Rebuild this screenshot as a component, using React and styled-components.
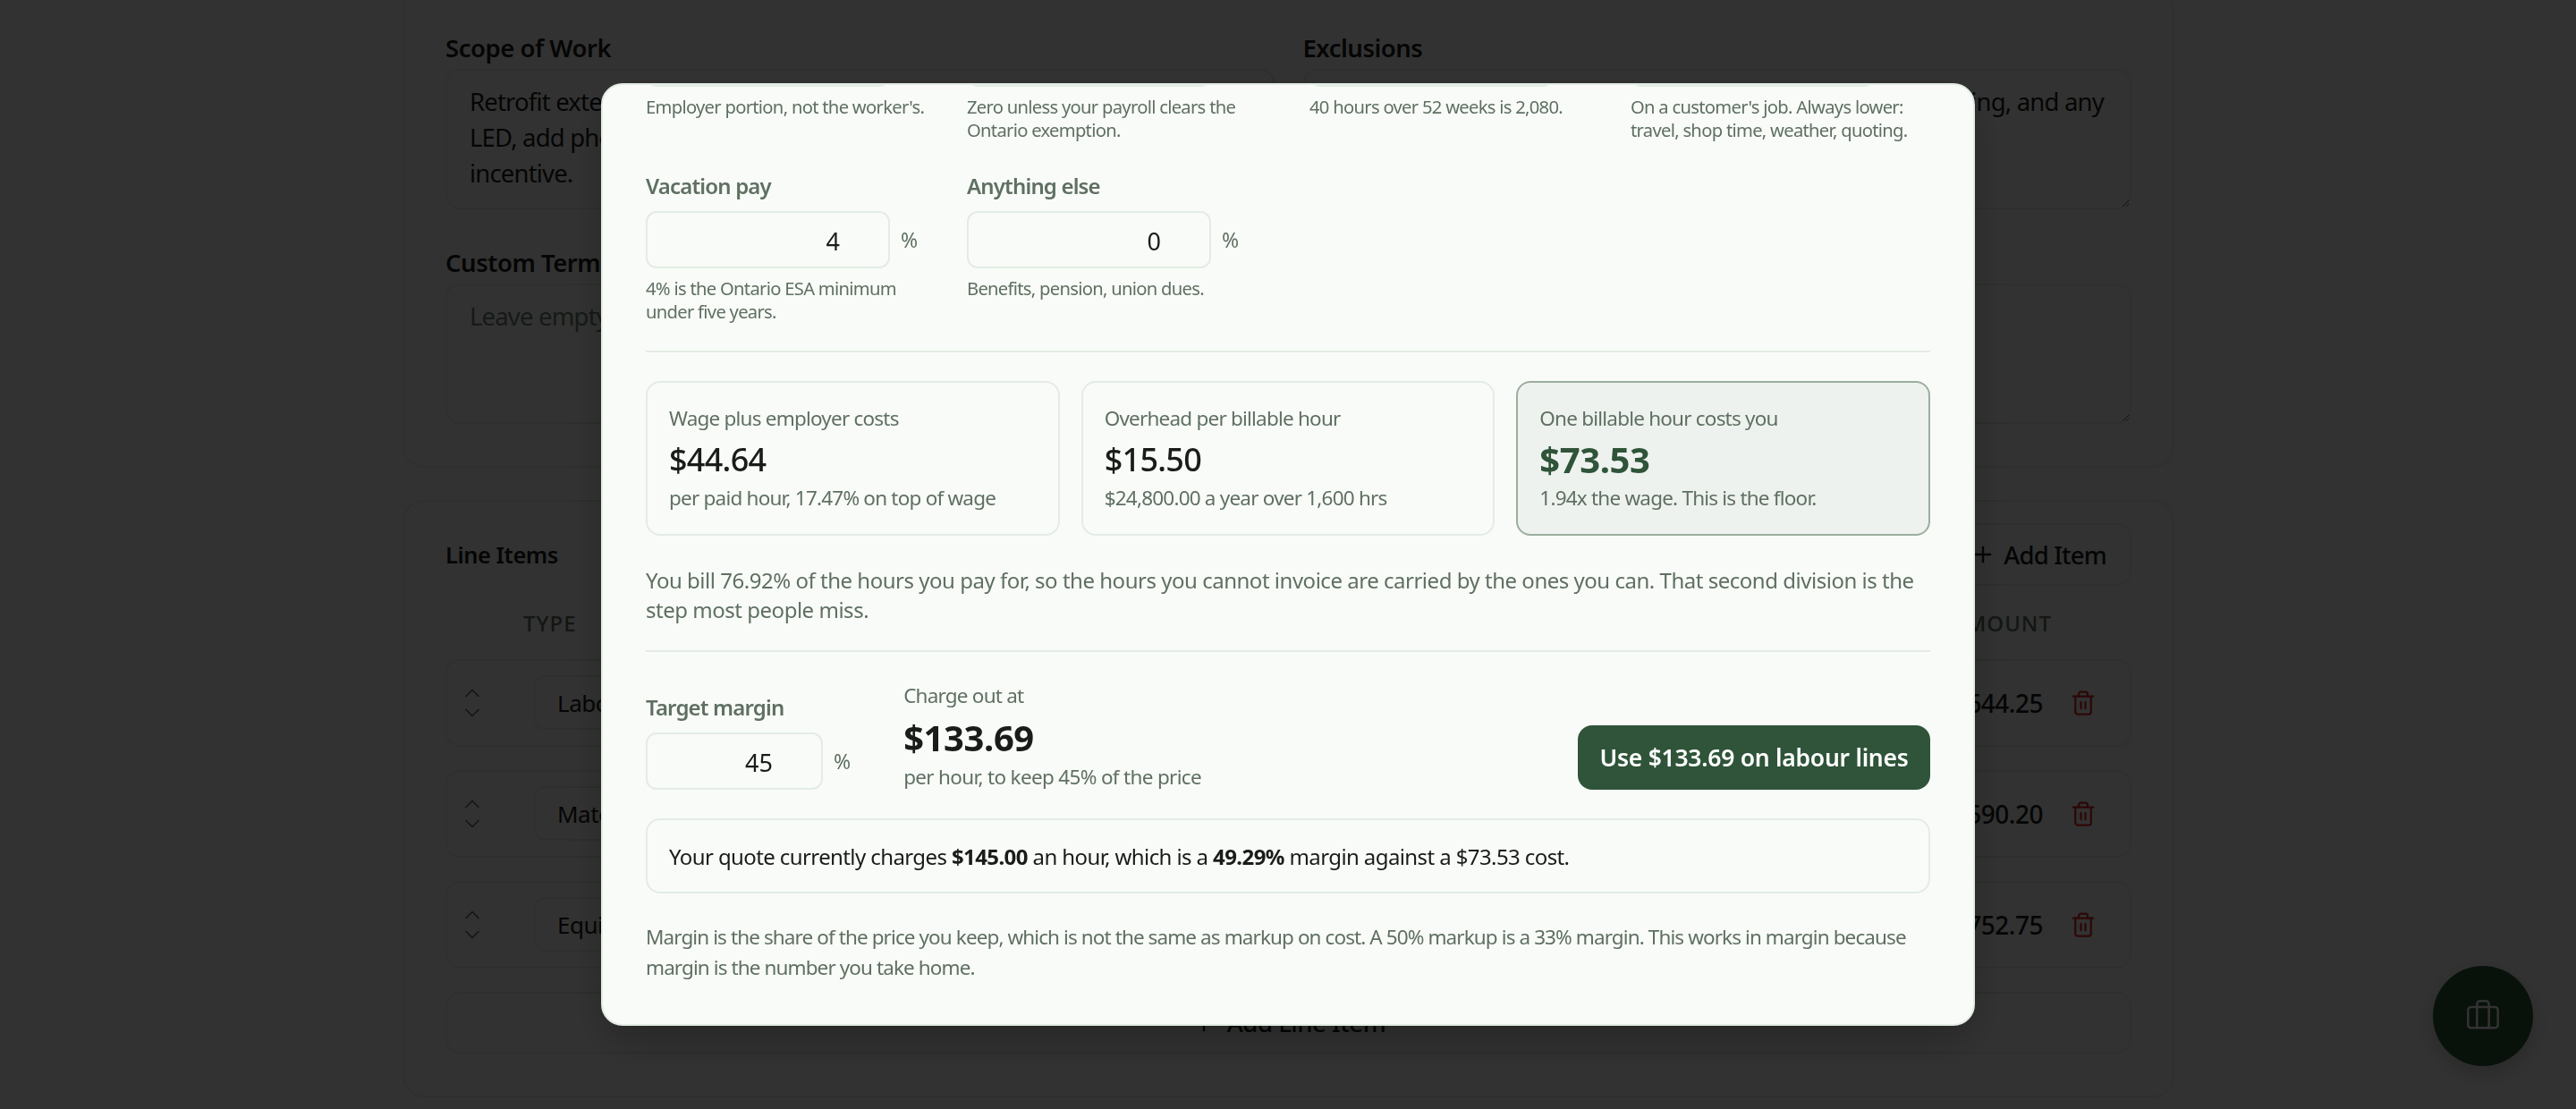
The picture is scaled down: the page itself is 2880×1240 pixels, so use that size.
import React from "react";
import styled, { createGlobalStyle } from "styled-components";
import { Briefcase, ChevronDown, ChevronUp, Plus, Trash2 } from "lucide-react";

const FONT = `"Noto Sans", sans-serif`;

const Global = createGlobalStyle`
  html, body { margin: 0; height: 100%; overflow: hidden; background: #fafbf9; }
  body { font-family: ${FONT}; color: #1a1c1a; letter-spacing: -0.03em; }
  * { box-sizing: border-box; }
`;

const Page = styled.main`
  width: 1981px;
  margin: -14px 0 0 450px;
  display: flex;
  flex-direction: column;
  gap: 36px;
`;
const Card = styled.section`
  border: 2px solid #e3ece4;
  border-radius: 24px;
  padding: ${(p) => p.$pad};
`;
const TwoCol = styled.div`
  display: grid;
  grid-template-columns: 1fr 1fr;
  column-gap: 32px;
  row-gap: 40px;
`;
const FieldLabel = styled.div`
  font-size: 27.5px;
  line-height: 40px;
  font-weight: 600;
  margin-bottom: 3px;
`;
const Area = styled.textarea`
  display: block;
  width: 100%;
  height: 157px;
  padding: 15px 18px 15px 25px;
  font: 400 27.5px/40px ${FONT};
  letter-spacing: -0.03em;
  color: #1a1c1a;
  background: transparent;
  border: 2px solid #e3ece4;
  border-radius: 16px;
  resize: vertical;
  outline: none;
  &::placeholder { color: #6f7f72; opacity: 1; }
`;
const ItemsHead = styled.div`
  display: flex;
  justify-content: space-between;
  align-items: center;
`;
const ItemsTitle = styled.h2`
  margin: 0;
  font-size: 25.5px;
  font-weight: 600;
`;
const AddItem = styled.button`
  height: 70px;
  padding: 0 26px;
  display: flex;
  align-items: center;
  gap: 9px;
  border: 2px solid #e3ece4;
  border-radius: 16px;
  background: transparent;
  font: 500 27.5px ${FONT};
  letter-spacing: -0.03em;
  color: #1a1c1a;
`;
const ColHead = styled.div`
  display: flex;
  justify-content: space-between;
  padding: 0 89px 0 87px;
  margin: 26px 0 24px;
  font-size: 24px;
  line-height: 32px;
  font-weight: 500;
  letter-spacing: 1px;
  color: #5f7062;
`;
const Rows = styled.div`
  display: flex;
  flex-direction: column;
  gap: 26.5px;
`;
const Row = styled.div`
  height: 97.5px;
  border: 2px solid #e3ece4;
  border-radius: 16px;
  display: flex;
  align-items: center;
  padding: 0 37px 0 14px;
`;
const Arrows = styled.div`
  width: 83px;
  display: flex;
  flex-direction: column;
  align-items: flex-start;
  gap: 0;
  color: #5f7062;
  svg { display: block; margin: -3px 0; }
`;
const KindSelect = styled.div`
  width: 400px;
  height: 61px;
  display: flex;
  align-items: center;
  padding: 0 24px;
  border: 2px solid #e3ece4;
  border-radius: 12px;
  font-size: 26px;
`;
const Amount = styled.div`
  margin-left: auto;
  font-size: 28px;
  font-weight: 500;
`;
const Remove = styled.div`
  width: 30px;
  margin-left: 30px;
  display: flex;
  color: #dc2626;
`;
const AddLine = styled.div`
  height: 69px;
  border: 2px solid #e3ece4;
  border-radius: 16px;
  display: flex;
  align-items: center;
  justify-content: center;
  gap: 12px;
  font-size: 27.5px;
  font-weight: 500;
`;
const Fab = styled.button`
  position: fixed;
  right: 48px;
  bottom: 48px;
  width: 112px;
  height: 112px;
  border: 0;
  border-radius: 50%;
  background: #2f5439;
  color: #fafbf9;
  display: flex;
  align-items: center;
  justify-content: center;
  box-shadow: 0 8px 24px rgba(0, 0, 0, 0.2);
`;
const Overlay = styled.div`
  position: fixed;
  inset: 0;
  background: rgba(0, 0, 0, 0.8);
  display: flex;
  align-items: center;
  justify-content: center;
`;
const Modal = styled.div`
  width: 1536px;
  height: 1054px;
  padding: 0 48px;
  background: #f9fbf8;
  border: 2px solid #e3ece4;
  border-radius: 24px;
  overflow: hidden;
  box-shadow: 0 20px 50px rgba(0, 0, 0, 0.25);
`;
const Columns = styled.div`
  margin-top: -62px;
  display: grid;
  grid-template-columns: 1fr 1fr;
  column-gap: 48px;
`;
const Group = styled.div`
  display: grid;
  grid-template-columns: 1fr 1fr;
  column-gap: 24px;
  row-gap: 32px;
  align-content: start;
`;
const Field = styled.div`
  min-width: 0;
`;
const Label = styled.div`
  font-size: 24px;
  line-height: 36px;
  font-weight: 600;
  letter-spacing: -0.035em;
  color: #5f7062;
  margin-bottom: 10px;
`;
const InputRow = styled.div`
  display: flex;
  align-items: center;
  gap: 12px;
`;
const NumberBox = styled.input`
  width: ${(p) => p.$w}px;
  height: 64px;
  padding: 3px 54px 0 24px;
  text-align: right;
  font: 400 27px ${FONT};
  color: #1a1c1a;
  background: transparent;
  border: 2px solid #e3ece4;
  border-radius: 12px;
  outline: none;
`;
const Unit = styled.span`
  font-size: 23px;
  letter-spacing: 0;
  color: #5f7062;
`;
const Help = styled.div`
  margin-top: 9px;
  font-size: 20.2px;
  line-height: 26px;
  letter-spacing: -0.035em;
  color: #5f7062;
`;
const Rule = styled.hr`
  margin: ${(p) => p.$m};
  border: 0;
  height: 2px;
  background: #e3ece4;
`;
const Stats = styled.div`
  display: grid;
  grid-template-columns: repeat(3, 1fr);
  gap: 24px;
`;
const Stat = styled.div`
  height: 173px;
  padding: 24px;
  border: 2px solid ${(p) => (p.$hot ? "#9bae9e" : "#e3ece4")};
  border-radius: 16px;
  background: ${(p) => (p.$hot ? "#eef2ee" : "transparent")};
`;
const StatLabel = styled.div`
  font-size: 22.5px;
  line-height: 32px;
  margin-bottom: 4px;
  letter-spacing: -0.035em;
  color: #5f7062;
`;
const StatValue = styled.div`
  font-size: ${(p) => (p.$hot ? 40 : 36)}px;
  line-height: 52px;
  letter-spacing: ${(p) => (p.$hot ? "-0.01em" : "-0.02em")};
  font-weight: ${(p) => (p.$hot ? 700 : 500)};
  color: ${(p) => (p.$hot ? "#2f5439" : "#1a1c1a")};
`;
const StatNote = styled.div`
  margin-top: 1px;
  font-size: 22.5px;
  line-height: 32px;
  letter-spacing: -0.035em;
  color: #5f7062;
`;
const Para = styled.p`
  margin: 33px 0 0;
  font-size: 24px;
  line-height: 33px;
  color: #5f7062;
`;
const Target = styled.div`
  display: flex;
  align-items: flex-end;
`;
const MarginField = styled.div`
  margin-right: 59px;
`;
const Charge = styled.div`
  flex: 1;
`;
const ChargeLabel = styled.div`
  font-size: 22.5px;
  line-height: 34px;
  letter-spacing: -0.035em;
  color: #5f7062;
`;
const ChargeValue = styled.div`
  font-size: 40px;
  line-height: 60px;
  letter-spacing: -0.01em;
  font-weight: 700;
`;
const ChargeNote = styled.div`
  font-size: 22.5px;
  line-height: 28px;
  letter-spacing: -0.03em;
  color: #5f7062;
`;
const Apply = styled.button`
  width: 394px;
  height: 72px;
  padding: 0;
  border: 0;
  border-radius: 16px;
  background: #2f5439;
  color: #fff;
  font: 600 26.5px ${FONT};
  letter-spacing: -0.01em;
`;
const Quote = styled.div`
  margin-top: 32px;
  height: 84px;
  padding: 0 24px;
  display: flex;
  align-items: center;
  border: 2px solid #e3ece4;
  border-radius: 16px;
  font-size: 24px;
  letter-spacing: -0.025em;
  white-space: pre;
`;
const Note = styled.p`
  margin: 32px 0 0;
  font-size: 22.5px;
  line-height: 34px;
  letter-spacing: -0.04em;
  color: #5f7062;
`;

const rows = [
  ["Labour", "$4,644.25"],
  ["Materials", "$6,590.20"],
  ["Equipment", "$2,752.75"],
];

function NumField({ label, value, help, w = 273 }) {
  return (
    <Field>
      {label && <Label>{label}</Label>}
      <InputRow>
        <NumberBox $w={w} readOnly value={value} />
        {value !== "" && <Unit>%</Unit>}
      </InputRow>
      {help && <Help>{help}</Help>}
    </Field>
  );
}

export default function App() {
  return (
    <>
      <Global />
      <Page>
        <Card $pad="46px 46px 47px">
          <TwoCol>
            <div>
              <FieldLabel>Scope of Work</FieldLabel>
              <Area
                defaultValue={"Retrofit exterior lighting at the rear lot, replace HID fixtures with\nLED, add photocell and timer control, and file the utility\nincentive."}
              />
            </div>
            <div>
              <FieldLabel>Exclusions</FieldLabel>
              <Area defaultValue={"Excludes permit, patching, painting, concrete coring, trenching, and any"} />
            </div>
            <div>
              <FieldLabel>Custom Terms</FieldLabel>
              <Area placeholder="Leave empty to use the default terms" />
            </div>
            <div>
              <FieldLabel>Notes</FieldLabel>
              <Area />
            </div>
          </TwoCol>
        </Card>
        <Card $pad="24px 46px 47px">
          <ItemsHead>
            <ItemsTitle>Line Items</ItemsTitle>
            <AddItem>
              <Plus size={28} strokeWidth={2} />
              Add Item
            </AddItem>
          </ItemsHead>
          <ColHead>
            <span>TYPE</span>
            <span>AMOUNT</span>
          </ColHead>
          <Rows>
            {rows.map(([kind, amount]) => (
              <Row key={kind}>
                <Arrows>
                  <ChevronUp size={28} strokeWidth={1.5} />
                  <ChevronDown size={28} strokeWidth={1.5} />
                </Arrows>
                <KindSelect>{kind}</KindSelect>
                <Amount>{amount}</Amount>
                <Remove>
                  <Trash2 size={30} strokeWidth={1.8} />
                </Remove>
              </Row>
            ))}
            <AddLine>
              <Plus size={28} />
              Add Line Item
            </AddLine>
          </Rows>
        </Card>
      </Page>
      <Fab aria-label="Jobs">
        <Briefcase size={40} strokeWidth={1.5} />
      </Fab>
      <Overlay>
        <Modal>
          <Columns>
            <Group>
              <NumField value="" help="Employer portion, not the worker's." />
              <NumField value="" help="Zero unless your payroll clears the Ontario exemption." />
              <NumField label="Vacation pay" value="4" help="4% is the Ontario ESA minimum under five years." />
              <NumField label="Anything else" value="0" help="Benefits, pension, union dues." />
            </Group>
            <Group>
              <NumField value="" help="40 hours over 52 weeks is 2,080." />
              <NumField value="" help="On a customer's job. Always lower: travel, shop time, weather, quoting." />
            </Group>
          </Columns>
          <Rule $m="31px 0 32px" />
          <Stats>
            <Stat>
              <StatLabel>Wage plus employer costs</StatLabel>
              <StatValue>$44.64</StatValue>
              <StatNote>per paid hour, 17.47% on top of wage</StatNote>
            </Stat>
            <Stat>
              <StatLabel>Overhead per billable hour</StatLabel>
              <StatValue>$15.50</StatValue>
              <StatNote>$24,800.00 a year over 1,600 hrs</StatNote>
            </Stat>
            <Stat $hot>
              <StatLabel>One billable hour costs you</StatLabel>
              <StatValue $hot>$73.53</StatValue>
              <StatNote>1.94x the wage. This is the floor.</StatNote>
            </Stat>
          </Stats>
          <Para>
            You bill 76.92% of the hours you pay for, so the hours you cannot invoice are carried by the ones you can. That second division is the step most people miss.
          </Para>
          <Rule $m="29px 0 32px" />
          <Target>
            <MarginField>
              <Label>Target margin</Label>
              <InputRow>
                <NumberBox $w={198} readOnly value="45" />
                <Unit>%</Unit>
              </InputRow>
            </MarginField>
            <Charge>
              <ChargeLabel>Charge out at</ChargeLabel>
              <ChargeValue>$133.69</ChargeValue>
              <ChargeNote>per hour, to keep 45% of the price</ChargeNote>
            </Charge>
            <Apply>Use $133.69 on labour lines</Apply>
          </Target>
          <Quote>
            Your quote currently charges <b>$145.00</b> an hour, which is a <b>49.29%</b> margin against a $73.53 cost.
          </Quote>
          <Note>
            Margin is the share of the price you keep, which is not the same as markup on cost. A 50% markup is a 33% margin. This works in margin because margin is the number you take home.
          </Note>
        </Modal>
      </Overlay>
    </>
  );
}
